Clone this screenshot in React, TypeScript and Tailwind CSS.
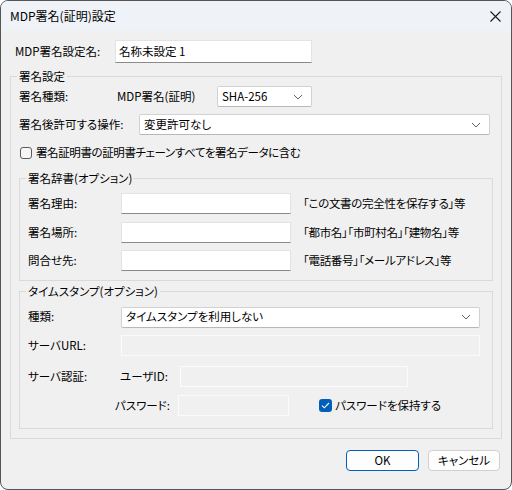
import React from "react";

const jp = "font-['Noto_Sans_CJK_JP','Noto_Sans',sans-serif] [font-feature-settings:'palt']";

function Chevron() {
  return (
    <svg width="10" height="6" viewBox="0 0 10 6" className="shrink-0">
      <path d="M1 1 L5 5 L9 1" fill="none" stroke="#606060" strokeWidth="1" />
    </svg>
  );
}

function TextBox({ className = "", value }: { className?: string; value?: string }) {
  return (
    <div
      className={`flex h-[21px] items-center border border-[#e3e3e3] border-b-[#8a8a8a] bg-white pl-[3px] ${className}`}
    >
      {value}
    </div>
  );
}

function DisabledBox({ className = "" }: { className?: string }) {
  return <div className={`h-[21px] border border-[#fbfbfb] bg-[#f0f0f0] ${className}`} />;
}

function Select({ className = "", value }: { className?: string; value: string }) {
  return (
    <div
      className={`flex h-[21px] items-center justify-between rounded-[2px] border border-[#d2d2d2] border-b-[#b8b8b8] bg-white pl-[4px] pr-[8px] ${className}`}
    >
      <span>{value}</span>
      <Chevron />
    </div>
  );
}

function Group({
  title,
  className = "",
  children,
}: {
  title: string;
  className?: string;
  children: React.ReactNode;
}) {
  return (
    <div className={`relative border border-[#dadada] ${className}`}>
      <span className="absolute left-[6px] top-[-9px] bg-[#f0f0f0] px-[2px] leading-[16px]">{title}</span>
      {children}
    </div>
  );
}

function CheckBox({ checked }: { checked?: boolean }) {
  if (checked) {
    return (
      <div className="flex h-[13px] w-[13px] shrink-0 items-center justify-center rounded-[3px] bg-[#005fb8]">
        <svg width="9" height="7" viewBox="0 0 9 7">
          <path d="M1 3.6 L3.3 5.8 L8 1" fill="none" stroke="white" strokeWidth="1.1" />
        </svg>
      </div>
    );
  }
  return <div className="h-[12px] w-[12px] shrink-0 rounded-[3px] border border-[#5c5c5c] bg-[#f6f6f6]" />;
}

export default function App() {
  return (
    <div className={`${jp} h-[490px] w-[512px] bg-white text-[11.5px] text-black`}>
      <div className="flex h-[490px] w-[512px] flex-col overflow-hidden rounded-[8px] border border-[#555555] bg-[#f0f0f0]">
        {/* title bar */}
        <div className="flex h-[30px] shrink-0 items-center justify-between bg-[#eff3f8] pl-[9px] pr-[10px]">
          <span className="text-[12px]">MDP署名(証明)設定</span>
          <svg width="11" height="11" viewBox="0 0 11 11">
            <path d="M0.5 0.5 L10.5 10.5 M10.5 0.5 L0.5 10.5" stroke="#1a1a1a" strokeWidth="1.1" />
          </svg>
        </div>

        <div className="flex flex-col px-[9px]">
          {/* setting name */}
          <div className="mt-[9px] flex h-[23px] items-center">
            <span className="ml-[5px] w-[100px]">MDP署名設定名:</span>
            <TextBox className="h-[23px] w-[197px]" value="名称未設定 1" />
          </div>

          <Group title="署名設定" className="mt-[13px] px-[8px] pb-[9px] pt-[9px]">
            <div className="flex h-[21px] items-center">
              <span className="w-[98px]">署名種類:</span>
              <span className="w-[100px]">MDP署名(証明)</span>
              <Select className="w-[95px]" value="SHA-256" />
            </div>
            <div className="mt-[7px] flex h-[21px] items-center">
              <span className="w-[120px]">署名後許可する操作:</span>
              <Select className="w-[351px]" value="変更許可なし" />
            </div>
            <div className="mt-[9px] flex h-[18px] items-center gap-[4px] pl-[1px]">
              <CheckBox />
              <span className="tracking-[-0.4px]">署名証明書の証明書チェーンすべてを署名データに含む</span>
            </div>

            <Group title="署名辞書(オプション)" className="mt-[16px] px-[8px] pb-[9px] pt-[14px]">
              <div className="flex h-[21px] items-center">
                <span className="w-[93px]">署名理由:</span>
                <TextBox className="w-[170px]" />
                <span className="ml-[12px] tracking-[-0.3px]">「この文書の完全性を保存する」等</span>
              </div>
              <div className="mt-[8px] flex h-[21px] items-center">
                <span className="w-[93px]">署名場所:</span>
                <TextBox className="w-[170px]" />
                <span className="ml-[12px] tracking-[-0.3px]">「都市名」「市町村名」「建物名」等</span>
              </div>
              <div className="mt-[7px] flex h-[21px] items-center">
                <span className="w-[93px]">問合せ先:</span>
                <TextBox className="w-[170px]" />
                <span className="ml-[12px] tracking-[-0.3px]">「電話番号」「メールアドレス」等</span>
              </div>
            </Group>

            <Group title="タイムスタンプ(オプション)" className="mt-[10px] px-[8px] pb-[12px] pt-[15px]">
              <div className="flex h-[20px] items-center">
                <span className="w-[93px]">種類:</span>
                <Select className="h-[20px] w-[359px]" value="タイムスタンプを利用しない" />
              </div>
              <div className="mt-[8px] flex h-[21px] items-center">
                <span className="w-[93px]">サーバURL:</span>
                <DisabledBox className="w-[359px]" />
              </div>
              <div className="mt-[10px] flex h-[21px] items-center">
                <span className="w-[92px]">サーバ認証:</span>
                <span className="w-[60px]">ユーザID:</span>
                <DisabledBox className="w-[228px]" />
              </div>
              <div className="mt-[8px] flex h-[21px] items-center">
                <span className="w-[150px] pr-[8px] text-right">パスワード:</span>
                <DisabledBox className="w-[111px]" />
                <div className="ml-[30px] flex items-center gap-[3px]">
                  <CheckBox checked />
                  <span>パスワードを保持する</span>
                </div>
              </div>
            </Group>
          </Group>

          {/* dialog buttons */}
          <div className="mt-[11px] flex justify-end gap-[9px] pr-[2px]">
            <button className="flex h-[21px] w-[73px] items-center justify-center rounded-[4px] border border-[#005fb8] bg-[#fdfdfd]">
              OK
            </button>
            <button className="flex h-[21px] w-[72px] items-center justify-center rounded-[4px] border border-[#d0d0d0] bg-[#fdfdfd]">
              キャンセル
            </button>
          </div>
        </div>
      </div>
    </div>
  );
}
